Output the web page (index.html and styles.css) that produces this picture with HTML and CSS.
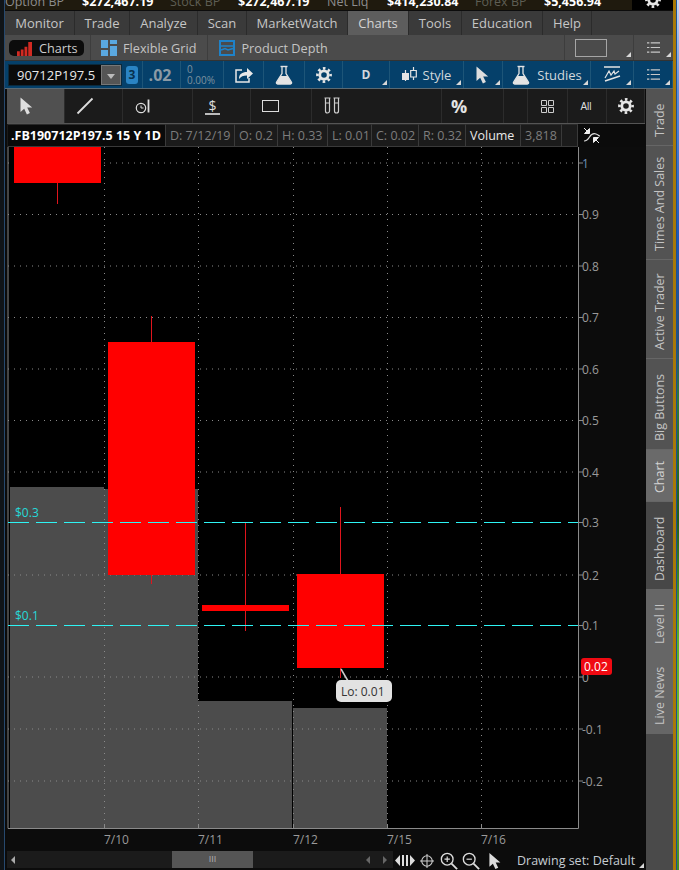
FILE: index.html
```html
<!DOCTYPE html>
<html lang="en">
<head>
<meta charset="utf-8">
<title>Charts</title>
<link rel="stylesheet" href="styles.css">
</head>
<body>
<svg class="defs" width="0" height="0" aria-hidden="true">
  <symbol id="gear" viewBox="0 0 16 16">
    <circle cx="8" cy="8" r="4.2" fill="none" stroke="currentColor" stroke-width="2.8"/>
    <circle cx="8" cy="8" r="6.6" fill="none" stroke="currentColor" stroke-width="2.6" stroke-dasharray="2.6 2.58" stroke-dashoffset="1.3"/>
  </symbol>
  <symbol id="flask" viewBox="0 0 20 20">
    <path d="M6.5 1.5h7" fill="none" stroke="currentColor" stroke-width="1.4"/>
    <path d="M8 2v6.5L2.6 17.2c-.6 1 .1 1.8 1 1.8h12.8c.9 0 1.6-.8 1-1.8L12 8.500V2" fill="none" stroke="currentColor" stroke-width="1.3"/>
    <path d="M6.500 11h7l4 6.800c.2.700-.3 1.200-1 1.200h-13c-.7 0-1.200-.5-1-1.200z" fill="currentColor"/>
  </symbol>
  <symbol id="cursor" viewBox="0 0 16 18">
    <path d="M1.500 0.500v14.500l3.700-3.200 2.700 5.700 3-1.400-2.700-5.500h5z" fill="currentColor"/>
  </symbol>
  <symbol id="lines" viewBox="0 0 14 13">
    <path d="M0 1.500h2.500M4 1.500h10M0 6.500h2.500M4 6.500h10M0 11.500h2.500M4 11.500h10" fill="none" stroke="currentColor" stroke-width="1.200"/>
  </symbol>
</svg>

<div class="app">
  <div class="edge-left"></div>
  <div class="window">

    <div class="status">
      <span class="label first">Option BP</span><span class="value">$272,467.19</span>
      <span class="label dim">Stock BP</span><span class="value">$272,467.19</span>
      <span class="label">Net Liq</span><span class="value">$414,230.84</span>
      <span class="label dim">Forex BP</span><span class="value">$5,456.94</span>
      <span class="status-gear"><svg class="ic-gear"><use href="#gear"/></svg></span>
    </div>

    <nav class="menu">
      <span class="menu-item">Monitor</span>
      <span class="menu-item">Trade</span>
      <span class="menu-item">Analyze</span>
      <span class="menu-item">Scan</span>
      <span class="menu-item">MarketWatch</span>
      <span class="menu-item active">Charts</span>
      <span class="menu-item">Tools</span>
      <span class="menu-item">Education</span>
      <span class="menu-item">Help</span>
    </nav>

    <div class="subtabs">
      <span class="pill">
        <svg class="ic-bars" viewBox="0 0 16 16"><path d="M0 11h3v5H0zM4 9h3v7H4zM8 6h3v10H8zM12 1h4v15h-4z" fill="#d22a22"/></svg>
        Charts
      </span>
      <span class="subtab grid-tab">
        <svg class="ic-grid" viewBox="0 0 16 16"><path d="M0 0h7v8H0zM9 0h7v4H9zM9 6h7v10H9zM0 10h7v6H0z" fill="#5aa8e0"/></svg>
        Flexible Grid
      </span>
      <span class="subtab depth-tab">
        <svg class="ic-depth" viewBox="0 0 16 16"><path d="M1 1h14v14H1z" fill="none" stroke="#1f82c8" stroke-width="2"/><path d="M2 6h12M2 10l4-1.500 3 1.500 5-1.500" fill="none" stroke="#1f82c8" stroke-width="1.500"/></svg>
        Product Depth
      </span>
      <span class="subtab-fill"></span>
      <span class="box-tab corner"><i class="box"></i></span>
      <span class="lines-tab corner"><svg class="ic-lines"><use href="#lines"/></svg></span>
    </div>

    <div class="quote">
      <span class="symbol"><b class="symbol-text">90712P197.5</b><i class="drop"></i></span>
      <span class="badge-cell"><span class="link-badge">3</span></span>
      <span class="last">.02</span>
      <span class="change"><span>0</span><span>0.00%</span></span>
      <span class="q"><svg class="ic-share" viewBox="0 0 18 16"><path d="M7 3H1v12h13v-4" fill="none" stroke="currentColor" stroke-width="1.500"/><path d="M4 12c0-5 3-7 8-7V1l6 5.500-6 5.500V8.500c-4 0-6 1-8 3.500z" fill="currentColor"/></svg></span>
      <span class="q"><svg class="ic-flask"><use href="#flask"/></svg></span>
      <span class="q"><svg class="ic-gear"><use href="#gear"/></svg></span>
      <span class="q corner d-cell">D</span>
      <span class="q corner"><svg class="ic-candle" viewBox="0 0 15 16"><path d="M3.500 3v11" stroke="currentColor" stroke-width="1.200"/><path d="M0 6h7v7H0z" fill="currentColor"/><path d="M11.500 0v13" stroke="currentColor" stroke-width="1.200"/><path d="M8.700 3.500h5.600v6.500H8.700z" fill="#05406a" stroke="currentColor" stroke-width="1.200"/></svg>Style</span>
      <span class="q corner"><svg class="ic-cursor"><use href="#cursor"/></svg></span>
      <span class="q corner"><svg class="ic-flask"><use href="#flask"/></svg>Studies</span>
      <span class="q corner"><svg class="ic-draw" viewBox="0 0 18 17"><path d="M1 1h16M2 15l15-5" fill="none" stroke="currentColor" stroke-width="1.500"/><path d="M2 12l4-7 2 4 3-4 1 3 4-3" fill="none" stroke="currentColor" stroke-width="1.200"/></svg></span>
      <span class="q corner"><svg class="ic-lines"><use href="#lines"/></svg></span>
    </div>

    <div class="workspace">
      <div class="pane">

        <div class="tools">
          <span class="tool active"><svg class="ic-cursor"><use href="#cursor"/></svg></span>
          <span class="tool"><svg class="ic-tool" viewBox="0 0 18 18"><path d="M1.500 16.500L16.500 1.500" stroke="#ddd" stroke-width="1.800"/></svg></span>
          <span class="tool"><svg class="ic-tool" viewBox="0 0 18 18"><circle cx="7" cy="11" r="4.700" fill="none" stroke="#ddd" stroke-width="1.200"/><path d="M7 8.500V11h2.500" fill="none" stroke="#ddd"/><path d="M14.500 2.500v13" stroke="#ddd" stroke-width="1.800"/></svg></span>
          <span class="tool"><span class="dollar">$</span></span>
          <span class="tool"><i class="rect"></i></span>
          <span class="tool"><svg class="ic-tubes" viewBox="0 0 18 18"><path d="M1.500 1h6M2.500 1v13a2 2 0 0 0 4 0V1M10.500 1h6M11.500 1v13a2 2 0 0 0 4 0V1M2.500 6h4M11.500 6h4" fill="none" stroke="#ccc" stroke-width="1.200"/></svg></span>
          <span class="tool percent">%</span>
          <span class="tool"></span>
          <span class="tool center"><svg class="ic-tile" viewBox="0 0 13 13"><path d="M.5.500h5v5h-5zM7.500.500h5v5h-5zM.5 7.500h5v5h-5zM7.500 7.500h5v5h-5z" fill="none" stroke="#ccc"/></svg></span>
          <span class="tool center all">All</span>
          <span class="tool center"><svg class="ic-gear"><use href="#gear"/></svg></span>
        </div>

        <div class="head">
          <span class="cell title">.FB190712P197.5 15 Y 1D</span>
          <span class="cell c-d">D: 7/12/19</span>
          <span class="cell c-o">O: 0.2</span>
          <span class="cell c-h">H: 0.33</span>
          <span class="cell c-l">L: 0.01</span>
          <span class="cell c-c">C: 0.02</span>
          <span class="cell c-r">R: 0.32</span>
          <span class="cell c-v">Volume</span>
          <span class="cell c-n">3,818</span>
          <span class="cell c-e"></span>
          <span class="head-axis"><svg class="ic-sync" viewBox="0 0 18 18"><path d="M1 12c3 0 4-1.500 5.500-4S10 4 13 5s2.500 2 4 2" fill="none" stroke="#ddd" stroke-width="1.200" transform="translate(0 2)"/><path d="M1 1l5 5M6.500 1.500v5h-5z" fill="#eee" stroke="#eee"/><path d="M16 16l-5-5M10.500 15.500v-5h5z" fill="#eee" stroke="#eee"/></svg></span>
        </div>

        <svg class="chart" viewBox="7 147 638 704" width="638" height="704">
          <rect x="7" y="147" width="638" height="704" fill="#000"/>
          <rect x="579" y="147" width="66" height="704" class="axis-bg"/>
          <rect x="7" y="829" width="638" height="22" class="axis-bg"/>

          <g class="vol">
            <rect x="10" y="487" width="94" height="341"/>
            <rect x="104" y="489" width="94" height="339"/>
            <rect x="198" y="701" width="94" height="127"/>
            <rect x="293" y="708" width="94" height="120"/>
          </g>

          <g class="grid">
            <path d="M8 163H578M8 214.500H578M8 266H578M8 317.500H578M8 369H578M8 420.500H578M8 472H578M8 575H578M8 677H578M8 729H578M8 781H578"/>
            <path d="M104.500 147V828M198.500 147V828M293.500 147V828M387.500 147V828M481.500 147V828"/>
          </g>

          <path class="frame" d="M8 147V828.500H578.500V147"/>
          <path class="ticks" d="M578 163h5M578 214.500h5M578 266h5M578 317.500h5M578 369h5M578 420.500h5M578 472h5M578 522.500h5M578 575h5M578 625.500h5M578 677h5M578 729h5M578 781h5M104.500 828v-4M198.500 828v-4M293.500 828v-4M387.500 828v-4M481.500 828v-4"/>

          <text class="cyan-text" x="15" y="517">$0.3</text>
          <text class="cyan-text" x="15" y="620">$0.1</text>

          <g class="wick">
            <path d="M57.500 183V204"/>
            <path d="M151.500 316V584"/>
            <path d="M245.500 522V631"/>
            <path d="M340.500 507V678"/>
          </g>
          <g class="body">
            <rect x="14" y="147" width="87" height="36"/>
            <rect x="108" y="342" width="87" height="233"/>
            <rect x="202" y="605" width="87" height="6"/>
            <rect x="297" y="574" width="87" height="94"/>
          </g>

          <g class="cyan">
            <path d="M8 522.500H578"/>
            <path d="M8 625.500H578"/>
          </g>

          <path class="pointer" d="M341 669l7 12"/>
          <rect class="tip" x="336" y="680" width="56" height="22" rx="5"/>
          <text class="tip-text" x="341" y="696">Lo: 0.01</text>

          <g class="ax">
            <text class="blue" x="582" y="168">1</text>
            <text x="582" y="219">0.9</text>
            <text x="582" y="271">0.8</text>
            <text x="582" y="322">0.7</text>
            <text x="582" y="374">0.6</text>
            <text x="582" y="425">0.5</text>
            <text x="582" y="477">0.4</text>
            <text x="582" y="527">0.3</text>
            <text x="582" y="580">0.2</text>
            <text x="582" y="630">0.1</text>
            <text x="582" y="682">0</text>
            <text x="582" y="734">-0.1</text>
            <text x="582" y="786">-0.2</text>
            <text x="104" y="844">7/10</text>
            <text x="198" y="844">7/11</text>
            <text x="293" y="844">7/12</text>
            <text x="387" y="844">7/15</text>
            <text x="481" y="844">7/16</text>
          </g>

          <rect class="last-tag" x="581" y="658" width="31" height="17" rx="3"/>
          <text class="last-text" x="584" y="671">0.02</text>
        </svg>

        <div class="bottom">
          <div class="track">
            <i class="arrow left"></i>
            <span class="thumb">III</span>
            <i class="arrow left dim-arrow"></i>
            <i class="arrow right dim-arrow"></i>
          </div>
          <div class="bottom-tools">
            <svg class="ic-resize" viewBox="0 0 20 13"><path d="M0 6.500L5 1v11zM7 1h2v11H7zM11 1h2v11h-2zM20 6.500L15 1v11z" fill="#ddd"/></svg>
            <svg class="ic-round" viewBox="0 0 16 16"><circle cx="8" cy="8" r="6" fill="none" stroke="#ccc" stroke-width="1.300"/><path d="M8 0v16M0 8h16" stroke="#ccc" stroke-width="1.200"/></svg>
            <svg class="ic-zoom plus" viewBox="0 0 20 20"><circle cx="8" cy="8" r="6.500" fill="none" stroke="#ddd" stroke-width="1.500"/><path d="M12.800 12.800L19 19" stroke="#ddd" stroke-width="2"/><path d="M5 8h6M8 5v6" stroke="#ddd" stroke-width="1.300"/></svg>
            <svg class="ic-zoom" viewBox="0 0 20 20"><circle cx="8" cy="8" r="6.500" fill="none" stroke="#ddd" stroke-width="1.500"/><path d="M12.800 12.800L19 19" stroke="#ddd" stroke-width="2"/><path d="M5 8h6" stroke="#ddd" stroke-width="1.300"/></svg>
            <svg class="ic-cursor2"><use href="#cursor"/></svg>
            <span class="drawing corner">Drawing set: Default</span>
          </div>
        </div>
      </div>

      <aside class="sidetabs">
        <span class="side t-trade">Trade</span>
        <span class="side t-times">Times And Sales</span>
        <span class="side t-active">Active Trader</span>
        <span class="side t-big">Big Buttons</span>
        <span class="side t-chart on">Chart</span>
        <span class="side t-dash low">Dashboard</span>
        <span class="side t-level on2">Level II</span>
        <span class="side t-news on2">Live News</span>
        <span class="side-fill"></span>
      </aside>
    </div>
  </div>
  <div class="edge-right"></div>
</div>
</body>
</html>
```

FILE: styles.css
```css
* { box-sizing: border-box; }
html, body { margin: 0; padding: 0; height: 100%; overflow: hidden; background: #0b0b0b; }
body { font-family: "Open Sans", "Liberation Sans", sans-serif; font-size: 13px; color: #c4c4c4; }
.defs { position: absolute; }
svg { display: block; flex: none; }

.app { display: flex; width: 679px; height: 870px; }
.edge-left { width: 5px; flex: none; background: #101418; border-right: 1px solid #27496e; }
.window { width: 668px; flex: none; display: flex; flex-direction: column; background: #0b0b0b; }
.edge-right {
  flex: 1;
  border-left: 3px solid #a87908;
  background: linear-gradient(180deg, #c6d8f0 0, #5f8fd8 90px, #1f58b8 240px, #23507c 340px, #2d7a3a 400px, #1d5e1c 520px, #58b22a 640px, #6cba34 740px, #3f8f22 870px);
  box-shadow: inset 1px 0 0 #1c4f96;
}

/* status */
.status {
  height: 11px; flex: none; overflow: hidden;
  display: grid; grid-template-columns: 77px 78px 78px 79px 70px 78px 79px 88px 41px;
  grid-template-rows: 10px;
  align-items: end; background: #1f1a0e; border-bottom: 1px solid #0c0c0c;
  font-size: 12.5px; line-height: 15px;
}
.status > span { height: 16px; white-space: nowrap; }
.label { padding-left: 10px; color: #8d8d8d; }
.label.first { padding-left: 0; }
.label.dim { color: #5e5e54; }
.value { font-weight: 700; color: #fff; }
.status > .status-gear { background: #000; display: flex; justify-content: center; align-items: flex-end; color: #eee; }
.status-gear .ic-gear { margin-bottom: 2px; }
.ic-gear { width: 16px; height: 16px; color: #e6e6e6; }

/* menu */
.menu {
  height: 24px; flex: none; display: grid; background: #3a3a3a;
  grid-template-columns: 70px 55px 68px 49px 101px 61px 53px 81px 49px;
}
.menu-item { text-align: center; line-height: 25px; border-right: 1px solid #2b2b2b; color: #c6c6c6; white-space: nowrap; }
.menu-item.active { background: #5d5d5d; color: #d4d4d4; }

/* sub tabs */
.subtabs { height: 26px; flex: none; display: flex; align-items: stretch; background: #4b4b4b; color: #c4c4c4; border-bottom: 1px solid #333; font-size: 12.7px; }
.pill { margin: 5px 6px 4px 4px; width: 75px; background: #0c0c0c; border-radius: 5px; display: flex; align-items: center; gap: 7px; padding-left: 8px; color: #ccc; line-height: 17px; }
.ic-bars { width: 15px; height: 15px; }
.subtab { display: flex; align-items: center; gap: 6px; border-left: 1px solid #3d3d3d; white-space: nowrap; }
.grid-tab { padding: 0 11px 0 10px; }
.depth-tab { padding: 0 11px; }
.ic-grid, .ic-depth { width: 16px; height: 16px; }
.subtab-fill { flex: 1; }
.box-tab { width: 69px; border-left: 1px solid #3d3d3d; display: flex; align-items: center; padding-left: 10px; }
.box { width: 32px; height: 18px; border: 1px solid #a6a6a6; display: block; }
.lines-tab { width: 40px; border-left: 1px solid #3d3d3d; display: flex; align-items: center; justify-content: center; }
.ic-lines { width: 13px; height: 13px; color: #c8c8c8; }
.corner { position: relative; }
.corner::after { content: ""; position: absolute; right: 2px; bottom: 3px; width: 0; height: 0; border-style: solid; border-width: 0 0 5px 5px; border-color: transparent transparent #d8d8d8 transparent; }

/* quote */
.quote {
  height: 28px; flex: none; display: grid; background: #05406a; border-bottom: 1px solid #5a6a74;
  grid-template-columns: 117px 21px 38px 43px 40px 41px 38px 47px 74px 39px 88px 43px 39px;
  align-items: stretch; color: #d2d8dc;
}
.quote > span { border-right: 1px solid #1d5578; display: flex; align-items: center; justify-content: center; gap: 6px; white-space: nowrap; }
.quote > .symbol { border: 1px solid #0a2a3e; background: #0b0b0b; margin: 3px 0 2px 3px; justify-content: space-between; padding-left: 8px; }
.symbol-text { font-weight: 400; color: #e8e8e8; font-size: 13px; }
.drop { width: 20px; height: 100%; background: #555; border: 1px solid #777; position: relative; display: block; }
.drop::after { content: ""; position: absolute; left: 5px; top: 8px; border-style: solid; border-width: 5px 4px 0 4px; border-color: #bbb transparent transparent transparent; }
.link-badge { width: 12px; height: 18px; border-radius: 3px; background: #2a84c4; color: #08314f; font-size: 12px; font-weight: 700; line-height: 18px; text-align: center; display: block; }
.quote > .last { font-size: 16px; font-weight: 700; color: #8b9aa5; padding-right: 3px; }
.quote > .change { flex-direction: column; align-items: flex-start; gap: 0; padding-left: 6px; font-size: 10px; line-height: 11px; color: #7d929f; }
.d-cell { font-size: 12px; font-weight: 700; }
.ic-share { width: 18px; height: 16px; color: #e8e8e8; }
.ic-flask { width: 20px; height: 20px; color: #e4e4e4; }
.ic-candle { width: 15px; height: 16px; color: #e4e4e4; }
.ic-cursor { width: 16px; height: 18px; color: #dedede; }
.ic-draw { width: 18px; height: 17px; color: #e4e4e4; }

/* workspace */
.workspace { flex: 1; display: flex; min-height: 0; }
.pane { width: 640px; flex: none; display: flex; flex-direction: column; padding-left: 2px; background: #0b0b0b; }

.tools {
  height: 35px; flex: none; display: grid; background: #1b1b1b; border-bottom: 1px solid #555;
  grid-template-columns: 58px 58px 70px 58px 61px 130px 62px 24px 40px 39px 38px;
}
.tool { border-right: 1px solid #2c2c2c; display: flex; align-items: center; justify-content: flex-start; padding-left: 11px; color: #ddd; }
.tool.center { justify-content: center; padding-left: 0; }
.tool.active { background: #505050; padding-left: 12px; }
.ic-tool { width: 18px; height: 18px; }
.dollar { display: block; width: 15px; text-align: center; font-size: 14px; line-height: 15px; border-bottom: 2px solid #bbb; margin-left: 1px; }
.rect { display: block; width: 17px; height: 12px; border: 1px solid #ddd; }
.ic-tubes { width: 18px; height: 18px; }
.tool.percent { padding-left: 9px; font-size: 18px; font-weight: 700; color: #e4e4e4; }
.ic-tile { width: 13px; height: 13px; }
.tool.all { font-size: 10px; font-family: "Liberation Sans", sans-serif; padding-right: 2px; }

.head { height: 23px; flex: none; display: flex; background: #1b1b1b; font-size: 12.5px; line-height: 21px; color: #7d7d7d; }
.cell { border-right: 1px solid #3a3a3a; border-top: 1px solid #2a2a2a; border-bottom: 1px solid #3a3a3a; padding-left: 4px; white-space: nowrap; overflow: hidden; flex: none; }
.cell.title { width: 158px; margin-left: 1px; background: #0a0a0a; color: #fff; font-weight: 700; padding-left: 3px; }
.c-d { width: 69px; } .c-o { width: 43px; } .c-h { width: 50px; } .c-l { width: 44px; }
.c-c { width: 47px; } .c-r { width: 47px; } .c-n { width: 41px; }
.cell.c-v { width: 55px; color: #e8e8e8; }
.cell.c-e { width: 16px; }
.head-axis { flex: 1; background: #0b0b0b; display: flex; align-items: center; padding-left: 5px; }
.ic-sync { width: 18px; height: 18px; }

.chart { width: 638px; height: 704px; flex: none; }
.axis-bg { fill: #0c0c0c; }
.vol rect { fill: #4c4c4c; }
.grid path { fill: none; stroke: #8a8a8a; stroke-width: 1; stroke-dasharray: 1 5; }
.frame { fill: none; stroke: #8a8a8a; stroke-width: 1; }
.ticks { fill: none; stroke: #8a8a8a; stroke-width: 1; }
.cyan path { fill: none; stroke: #2ef4f4; stroke-width: 1; stroke-dasharray: 21 7; }
.cyan-text { fill: #26d8d8; font-size: 12px; }
.wick path { fill: none; stroke: #e0151d; stroke-width: 1; }
.body rect { fill: #ff0000; }
.pointer { fill: none; stroke: #ccc; stroke-width: 1.500; }
.tip { fill: #e2e2e2; }
.tip-text { fill: #333; font-size: 12px; }
.ax text { fill: #9a9a9a; font-size: 12px; }
.ax text.blue { fill: #6d8fb4; }
.last-tag { fill: #f00a12; }
.last-text { fill: #fff; font-size: 12px; }

.bottom { height: 19px; flex: none; display: flex; background: #0c0c0c; }
.track { width: 386px; height: 17px; flex: none; background: #1b1b1b; display: flex; align-items: center; padding-left: 4px; }
.arrow { display: block; width: 0; height: 0; border-style: solid; }
.arrow.left { border-width: 4px 4px 4px 0; border-color: transparent #aaa transparent transparent; }
.arrow.right { border-width: 4px 0 4px 4px; border-color: transparent transparent transparent #666; margin-left: 13px; }
.arrow.dim-arrow.left { border-right-color: #666; margin-left: 113px; }
.thumb { margin-left: 157px; width: 81px; height: 17px; background: #555; text-align: center; color: #aaa; font-size: 9px; line-height: 17px; font-family: "Liberation Sans", sans-serif; }
.bottom-tools { flex: 1; display: flex; align-items: center; padding-left: 2px; height: 19px; }
.ic-resize { width: 20px; height: 13px; }
.ic-round { width: 14px; height: 14px; margin-left: 5px; }
.ic-zoom { width: 18px; height: 18px; margin-left: 4px; }
.ic-zoom.plus { margin-left: 6px; }
.ic-cursor2 { width: 15px; height: 18px; margin-left: 8px; color: #ddd; }
.drawing { margin-left: 14px; padding-right: 9px; font-size: 12.5px; color: #c6ccd2; white-space: nowrap; }
.drawing.corner::after { right: 0; bottom: 1px; }

/* side tabs */
.sidetabs { flex: 1; display: flex; flex-direction: column; background: #0b0b0b; padding-left: 1px; }
.side { writing-mode: vertical-rl; transform: rotate(180deg); display: flex; align-items: center; justify-content: flex-start; padding-top: 8px; flex: none; background: #535353; color: #c4c4c4; font-size: 12.5px; border-top: 1px solid #666; white-space: nowrap; }
.side.on { background: #6a6a6a; color: #d4d4d4; }
.side.on2 { background: #666; }
.side.low { background: #474747; }
.t-trade { height: 57px; }
.t-times { height: 114px; }
.t-active { height: 99px; }
.t-big { height: 91px; }
.t-chart { height: 52px; }
.t-dash { height: 88px; }
.t-level { height: 63px; }
.t-news { height: 81px; }
.side-fill { flex: 1; background: #4a4a4a; }
```
